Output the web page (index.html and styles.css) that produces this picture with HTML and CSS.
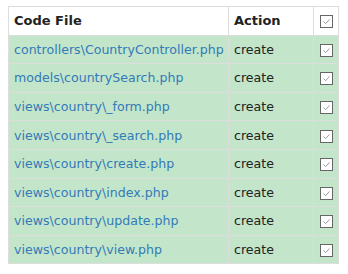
FILE: index.html
```html
<!DOCTYPE html>
<html lang="en">

<head>
    <meta charset="UTF-8">
    <title>Code Files</title>
    <link rel="stylesheet" href="styles.css">
</head>

<body>
    <table class="files-table">
        <thead>
            <tr>
                <th class="file">Code File</th>
                <th class="action">Action</th>
                <th class="check"><span class="box"><svg viewBox="0 0 13 13"><path d="M3 6.5 L5.5 9 L10 4" /></svg></span></th>
            </tr>
        </thead>
        <tbody>
            <tr>
                <td><a href="#">controllers\CountryController.php</a></td>
                <td>create</td>
                <td class="check"><span class="box"><svg viewBox="0 0 13 13"><path d="M3 6.5 L5.5 9 L10 4" /></svg></span></td>
            </tr>
            <tr>
                <td><a href="#">models\countrySearch.php</a></td>
                <td>create</td>
                <td class="check"><span class="box"><svg viewBox="0 0 13 13"><path d="M3 6.5 L5.5 9 L10 4" /></svg></span></td>
            </tr>
            <tr>
                <td><a href="#">views\country\_form.php</a></td>
                <td>create</td>
                <td class="check"><span class="box"><svg viewBox="0 0 13 13"><path d="M3 6.5 L5.5 9 L10 4" /></svg></span></td>
            </tr>
            <tr>
                <td><a href="#">views\country\_search.php</a></td>
                <td>create</td>
                <td class="check"><span class="box"><svg viewBox="0 0 13 13"><path d="M3 6.5 L5.5 9 L10 4" /></svg></span></td>
            </tr>
            <tr>
                <td><a href="#">views\country\create.php</a></td>
                <td>create</td>
                <td class="check"><span class="box"><svg viewBox="0 0 13 13"><path d="M3 6.5 L5.5 9 L10 4" /></svg></span></td>
            </tr>
            <tr>
                <td><a href="#">views\country\index.php</a></td>
                <td>create</td>
                <td class="check"><span class="box"><svg viewBox="0 0 13 13"><path d="M3 6.5 L5.5 9 L10 4" /></svg></span></td>
            </tr>
            <tr>
                <td><a href="#">views\country\update.php</a></td>
                <td>create</td>
                <td class="check"><span class="box"><svg viewBox="0 0 13 13"><path d="M3 6.5 L5.5 9 L10 4" /></svg></span></td>
            </tr>
            <tr>
                <td><a href="#">views\country\view.php</a></td>
                <td>create</td>
                <td class="check"><span class="box"><svg viewBox="0 0 13 13"><path d="M3 6.5 L5.5 9 L10 4" /></svg></span></td>
            </tr>
        </tbody>
    </table>
</body>

</html>
```

FILE: styles.css
```css
* {
    margin: 0;
    padding: 0;
    box-sizing: border-box;
}

body {
    font-family: 'DejaVu Sans', Verdana, sans-serif;
    font-size: 12.6px;
    color: #222;
    background: #fff;
    padding: 6px 10px 0 8px;
}

.files-table {
    border-collapse: collapse;
    table-layout: fixed;
    width: 330px;
    border: 1px solid #ddd;
}

.files-table th,
.files-table td {
    border: 1px solid #ddd;
    padding: 0 5px;
    height: 28.6px;
    text-align: left;
    vertical-align: middle;
    white-space: nowrap;
}

.files-table th {
    font-weight: bold;
    font-size: 13px;
    background: #fff;
}

.files-table tbody td {
    background: #c3e6cb;
}

.files-table a {
    color: #337ab7;
    text-decoration: none;
}

.file {
    width: 220px;
}

.action {
    width: 85px;
}

.files-table .check {
    width: 25px;
    text-align: center;
    padding: 0;
}

.box {
    display: inline-block;
    width: 13px;
    height: 13px;
    border: 1px solid #666;
    background: #fff;
    vertical-align: middle;
}

.box svg {
    display: block;
    width: 11px;
    height: 11px;
}

.box path {
    fill: none;
    stroke: #888;
    stroke-width: 1;
}
```
